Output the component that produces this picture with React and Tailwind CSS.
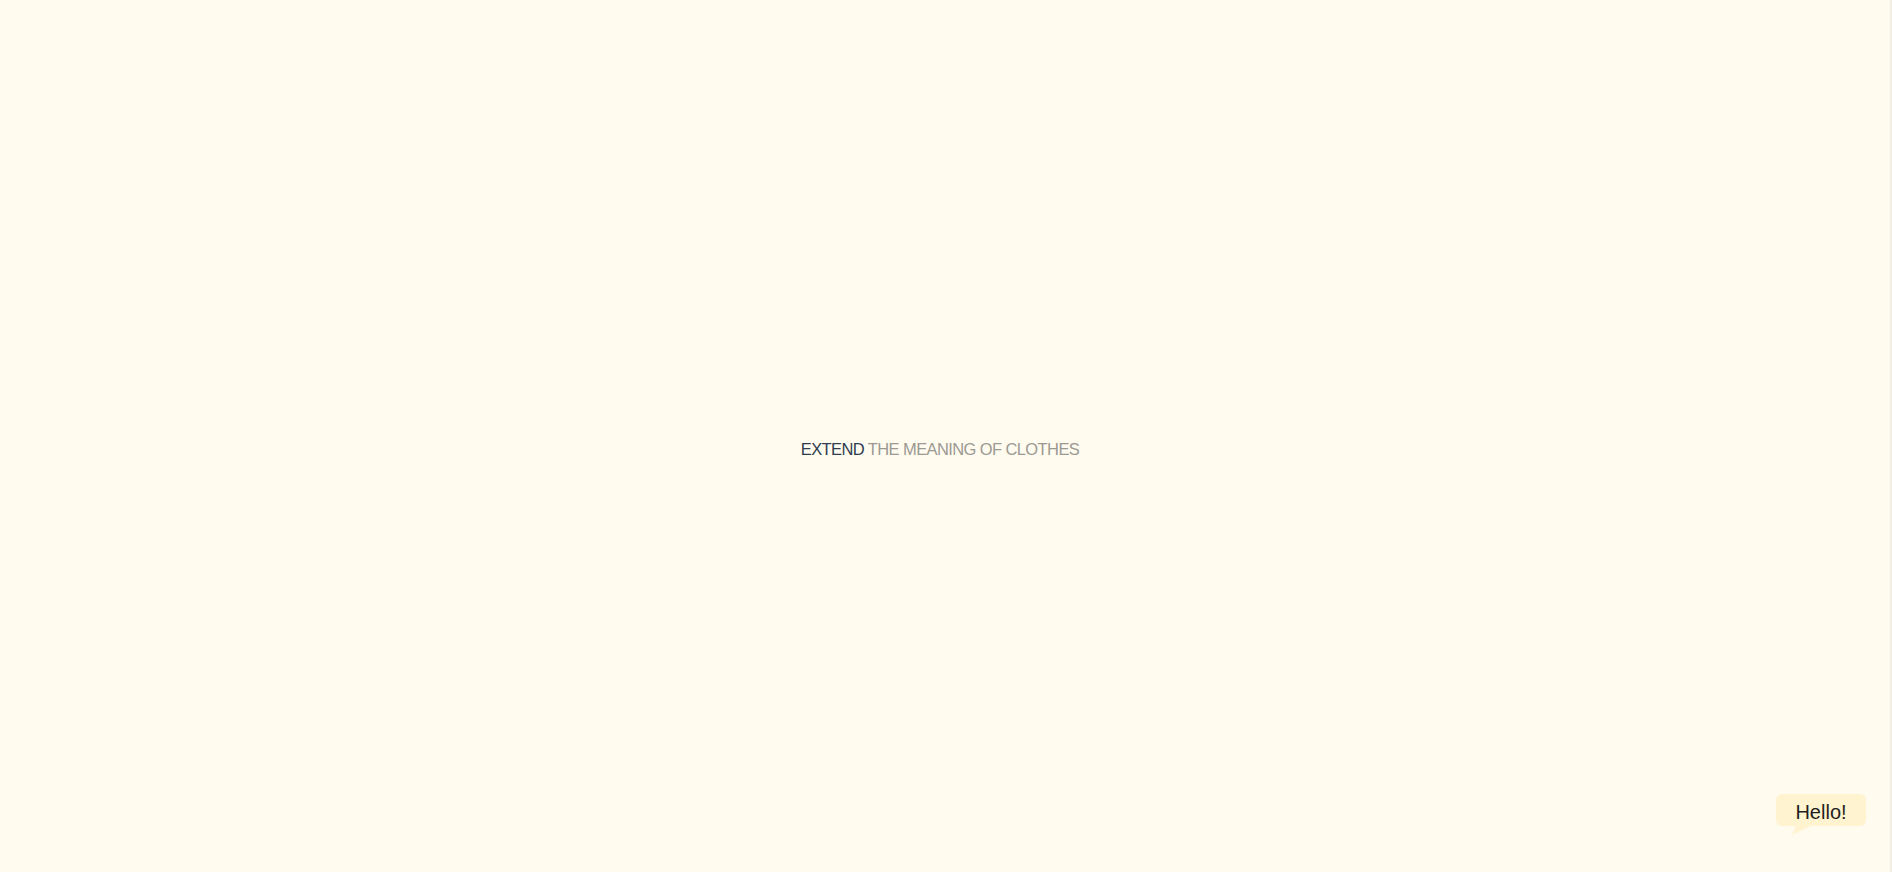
export default function App() {
  return (
    <div className="relative h-screen w-full overflow-hidden bg-[#fffbef] border-r-2 border-[#f1ede2]">
      <main className="flex h-full items-center justify-center pt-[26px] pr-[10px]">
        <h1 className="font-['Liberation_Sans',Arial,sans-serif] text-[16.5px] leading-none font-normal tracking-[-0.6px]">
          <span className="text-[#2e3d50]">EXTEND</span>{" "}
          <span className="text-[#9c9993]">THE MEANING OF CLOTHES</span>
        </h1>
      </main>

      <div className="fixed right-[26px] bottom-[46px]">
        <div className="flex h-[32px] w-[90px] items-center justify-center rounded-[6px] bg-[#fff4cf] pt-[3px] font-['Liberation_Sans',Arial,sans-serif] text-[20px] text-[#1f1f1f]">
          Hello!
        </div>
        <svg className="absolute left-[16px] top-[31px]" width="22" height="11" viewBox="0 0 22 11">
          <polygon points="4,0 21,0 0,10" fill="#fff4cf" />
        </svg>
      </div>
    </div>
  );
}
